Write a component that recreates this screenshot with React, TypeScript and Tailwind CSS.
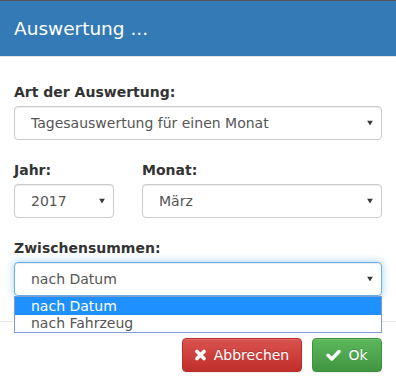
import { useState } from 'react';

function Arrow() {
    return (
        <svg className="absolute right-[8px] top-1/2 -translate-y-1/2" width="6" height="5" viewBox="0 0 6 5">
            <polygon points="0,0 6,0 3,5" fill="#3a3a3a" />
        </svg>
    );
}

function FakeSelect({ value, focused = false }: { value: string; focused?: boolean }) {
    return (
        <div
            className={
                focused
                    ? 'relative flex h-[34px] items-center rounded-[4px] border border-[#66afe9] bg-white pl-[16px] text-[14px] text-[#555] shadow-[inset_0_1px_1px_rgba(0,0,0,0.075),0_0_8px_rgba(102,175,233,0.6)]'
                    : 'relative flex h-[34px] items-center rounded-[4px] border border-[#ccc] bg-white pl-[16px] text-[14px] text-[#555] shadow-[inset_0_1px_1px_rgba(0,0,0,0.075)]'
            }
        >
            {value}
            <Arrow />
        </div>
    );
}

function Label({ children }: { children: string }) {
    return <div className="mb-[4px] h-[20px] text-[14px] font-bold leading-[20px] text-[#333]">{children}</div>;
}

export default function App() {
    const [selected] = useState('nach Datum');
    const options = ['nach Datum', 'nach Fahrzeug'];

    return (
        <div className="h-[379px] w-[396px] overflow-hidden bg-white font-['DejaVu_Sans',sans-serif]">
            {/* Header */}
            <div className="border-t border-t-[#555] border-b border-b-[#e5e5e5]">
                <div className="flex h-[55px] items-center bg-[#337ab7] px-[14px] text-[18.5px] leading-[25px] text-white">
                    Auswertung ...
                </div>
            </div>

            {/* Body */}
            <div className="px-[14px] pt-[25px] pb-[25px]">
                <div className="mb-[20px]">
                    <Label>Art der Auswertung:</Label>
                    <FakeSelect value="Tagesauswertung für einen Monat" />
                </div>

                <div className="mb-[20px] flex gap-[28px]">
                    <div className="w-[100px]">
                        <Label>Jahr:</Label>
                        <FakeSelect value="2017" />
                    </div>
                    <div className="flex-1">
                        <Label>Monat:</Label>
                        <FakeSelect value="März" />
                    </div>
                </div>

                <div>
                    <Label>Zwischensummen:</Label>
                    <div className="relative">
                        <FakeSelect value={selected} focused />
                        <div className="absolute left-0 right-0 top-full z-10 border border-[#7f9ccf] bg-white text-[14px]">
                            {options.map((o) => (
                                <div
                                    key={o}
                                    className={
                                        o === selected
                                            ? 'flex h-[18px] items-center bg-[#1e90ff] pl-[16px] text-white'
                                            : 'flex h-[17px] items-center pl-[16px] text-[#555]'
                                    }
                                >
                                    {o}
                                </div>
                            ))}
                        </div>
                    </div>
                </div>
            </div>

            {/* Footer */}
            <div className="flex justify-end gap-[10px] border-t border-[#e5e5e5] px-[14px] pt-[16px]">
                <button className="flex h-[34px] w-[120px] items-center justify-center gap-[8px] rounded-[4px] border border-[#b92c28] bg-[linear-gradient(to_bottom,#d9534f,#c12e2a)] text-[14px] text-white shadow-[inset_0_1px_0_rgba(255,255,255,0.15),0_1px_1px_rgba(0,0,0,0.075)] [text-shadow:0_-1px_0_rgba(0,0,0,0.2)]">
                    <svg width="11" height="12" viewBox="0 0 11 12">
                        <path d="M2 2.5 L9 9.5 M9 2.5 L2 9.5" stroke="white" strokeWidth="3.6" strokeLinecap="round" />
                    </svg>
                    Abbrechen
                </button>
                <button className="flex h-[34px] w-[70px] items-center justify-center gap-[7px] rounded-[4px] border border-[#3e8f3e] bg-[linear-gradient(to_bottom,#5cb85c,#419641)] text-[14px] text-white shadow-[inset_0_1px_0_rgba(255,255,255,0.15),0_1px_1px_rgba(0,0,0,0.075)] [text-shadow:0_-1px_0_rgba(0,0,0,0.2)]">
                    <svg width="15" height="12" viewBox="0 0 15 12">
                        <path d="M2 6.2 L5.8 10 L13 2.5" fill="none" stroke="white" strokeWidth="3.4" strokeLinecap="round" strokeLinejoin="round" />
                    </svg>
                    Ok
                </button>
            </div>
        </div>
    );
}
